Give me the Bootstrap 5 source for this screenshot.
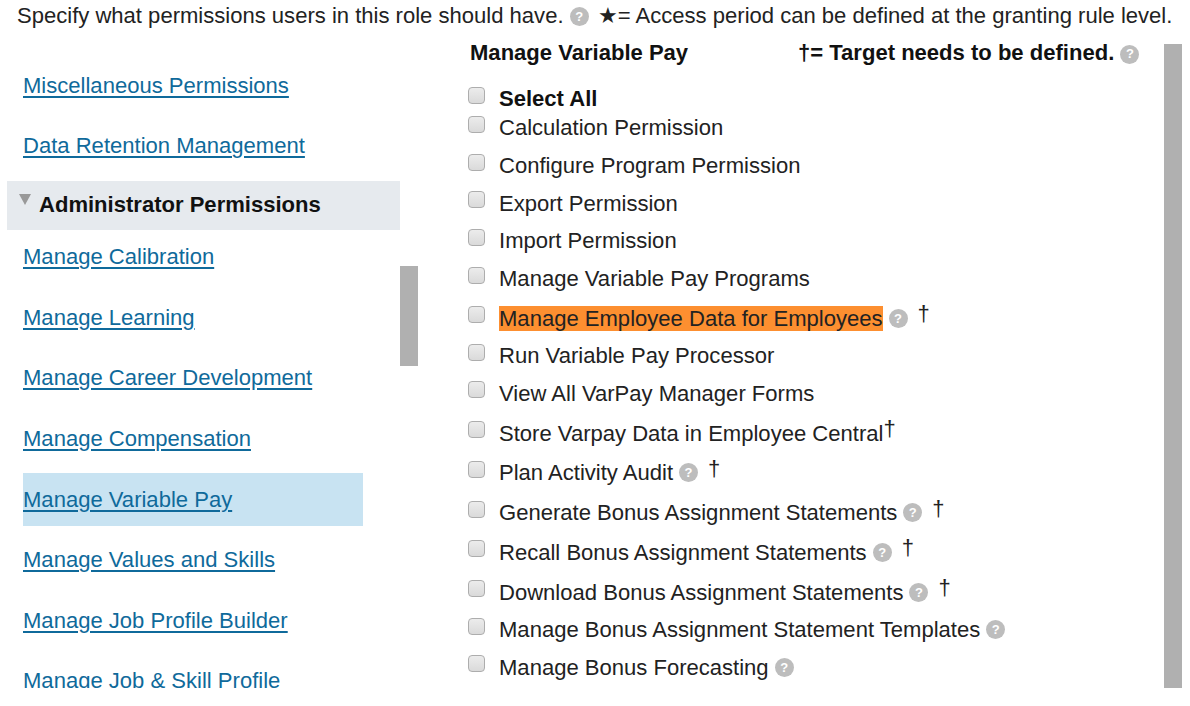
<!DOCTYPE html>
<html lang="en"><head><meta charset="utf-8"><title>Permissions</title>
<link href="https://cdn.jsdelivr.net/npm/bootstrap@5.3.0/dist/css/bootstrap.min.css" rel="stylesheet">
<style>
html,body{height:706px;overflow:hidden}
body{font-family:"Liberation Sans",Arial,sans-serif;font-size:22.05px;line-height:25px;color:#222;background:#fff}
.perm-top{height:44px;padding:3px 0 0 17px;white-space:nowrap}
.perm-main{height:644px}
.perm-left{width:393px;margin-left:7px;overflow:hidden;flex:none;height:644px}
.perm-link{height:53px;margin:0 0 7.6px 16px;width:340px;padding-top:13.9px}
.perm-link a{color:#0f6a9b;text-decoration:underline;text-underline-offset:3px}
.perm-link.is-first{margin-top:15px}
.perm-link.is-on{background:#c8e3f2}
.perm-head{background:#e6eaee;height:49.3px;margin-top:8.4px;display:flex;align-items:center;font-weight:700;color:#111;padding:0 0 2px 12px}
.perm-tri{width:0;height:0;border-left:6px solid transparent;border-right:6px solid transparent;border-top:11px solid #999;margin:-10px 8px 0 0}
.perm-thumb-l{width:18px;height:100px;background:#b0b0b0;margin-top:222px;flex:none}
.perm-right{width:746px;padding-left:47px;flex:none}
.perm-title{height:44px;line-height:17px;font-weight:700;color:#111;display:flex;padding-left:5px;white-space:nowrap}
.perm-title .t1{width:328px;flex:none}
.perm-row{height:37.7px;display:flex;align-items:center;padding-left:3px;white-space:nowrap}
.perm-row.is-all{height:21px;font-weight:700;color:#111}
.perm-row.is-tall{height:39.8px;padding-top:2.2px}
.perm-row.is-mid{height:39.3px;padding-top:2.5px}
.perm-row.is-last{height:37px}
.perm-box{appearance:none;width:17px;height:17px;border:1px solid #adadad;border-radius:4px;background:linear-gradient(#ececec,#dadada);margin:-7px 14px 0 0;flex:none}
.perm-mark{background:#fd8f30}
.perm-help{display:inline-flex;width:19px;height:19px;border-radius:50%;background:#bdbdbd;color:#fff;font-size:13px;font-weight:700;line-height:19px;justify-content:center;margin-left:6px}
.perm-help.is-near{margin-left:0;vertical-align:2px}
.perm-help.is-lead{margin-right:3px}
.perm-title .perm-help{line-height:17px;height:19px;vertical-align:2px}
.perm-dag{position:relative;top:-4px;margin-left:10px;line-height:1}
.perm-dag.is-tight{margin-left:0}
.perm-thumb-r{width:18px;height:644px;background:#b0b0b0;flex:none}
</style></head>
<body>
<div class="perm-top">Specify what permissions users in this role should have. <span class="perm-help is-near is-lead">?</span> ★= Access period can be defined at the granting rule level.</div>
<div class="perm-main d-flex">
  <div class="perm-left">
    <div class="perm-link is-first"><a href="#">Miscellaneous Permissions</a></div>
    <div class="perm-link"><a href="#">Data Retention Management</a></div>
    <div class="perm-head"><span class="perm-tri"></span>Administrator Permissions</div>
    <div class="perm-link"><a href="#">Manage Calibration</a></div>
    <div class="perm-link"><a href="#">Manage Learning</a></div>
    <div class="perm-link"><a href="#">Manage Career Development</a></div>
    <div class="perm-link"><a href="#">Manage Compensation</a></div>
    <div class="perm-link is-on"><a href="#">Manage Variable Pay</a></div>
    <div class="perm-link"><a href="#">Manage Values and Skills</a></div>
    <div class="perm-link"><a href="#">Manage Job Profile Builder</a></div>
    <div class="perm-link"><a href="#">Manage Job &amp; Skill Profile</a></div>
  </div>
  <div class="perm-thumb-l"></div>
  <div class="perm-right">
    <div class="perm-title"><span class="t1">Manage Variable Pay</span><span>†= Target needs to be defined. <span class="perm-help is-near">?</span></span></div>
    <div class="perm-row is-all"><input class="perm-box" type="checkbox">Select All</div>
    <div class="perm-row"><input class="perm-box" type="checkbox">Calculation Permission</div>
    <div class="perm-row"><input class="perm-box" type="checkbox">Configure Program Permission</div>
    <div class="perm-row"><input class="perm-box" type="checkbox">Export Permission</div>
    <div class="perm-row"><input class="perm-box" type="checkbox">Import Permission</div>
    <div class="perm-row"><input class="perm-box" type="checkbox">Manage Variable Pay Programs</div>
    <div class="perm-row is-tall is-mid"><input class="perm-box" type="checkbox"><span class="perm-mark">Manage Employee Data for Employees</span><span class="perm-help">?</span><span class="perm-dag">†</span></div>
    <div class="perm-row"><input class="perm-box" type="checkbox">Run Variable Pay Processor</div>
    <div class="perm-row"><input class="perm-box" type="checkbox">View All VarPay Manager Forms</div>
    <div class="perm-row is-tall"><input class="perm-box" type="checkbox">Store Varpay Data in Employee Central<span class="perm-dag is-tight">†</span></div>
    <div class="perm-row is-tall"><input class="perm-box" type="checkbox">Plan Activity Audit<span class="perm-help">?</span><span class="perm-dag">†</span></div>
    <div class="perm-row is-tall"><input class="perm-box" type="checkbox">Generate Bonus Assignment Statements<span class="perm-help">?</span><span class="perm-dag">†</span></div>
    <div class="perm-row is-tall"><input class="perm-box" type="checkbox">Recall Bonus Assignment Statements<span class="perm-help">?</span><span class="perm-dag">†</span></div>
    <div class="perm-row is-tall"><input class="perm-box" type="checkbox">Download Bonus Assignment Statements<span class="perm-help">?</span><span class="perm-dag">†</span></div>
    <div class="perm-row"><input class="perm-box" type="checkbox">Manage Bonus Assignment Statement Templates<span class="perm-help">?</span></div>
    <div class="perm-row is-last"><input class="perm-box" type="checkbox">Manage Bonus Forecasting<span class="perm-help">?</span></div>
  </div>
  <div class="perm-thumb-r"></div>
</div>
<script src="https://cdn.jsdelivr.net/npm/bootstrap@5.3.0/dist/js/bootstrap.bundle.min.js"></script>
</body></html>
